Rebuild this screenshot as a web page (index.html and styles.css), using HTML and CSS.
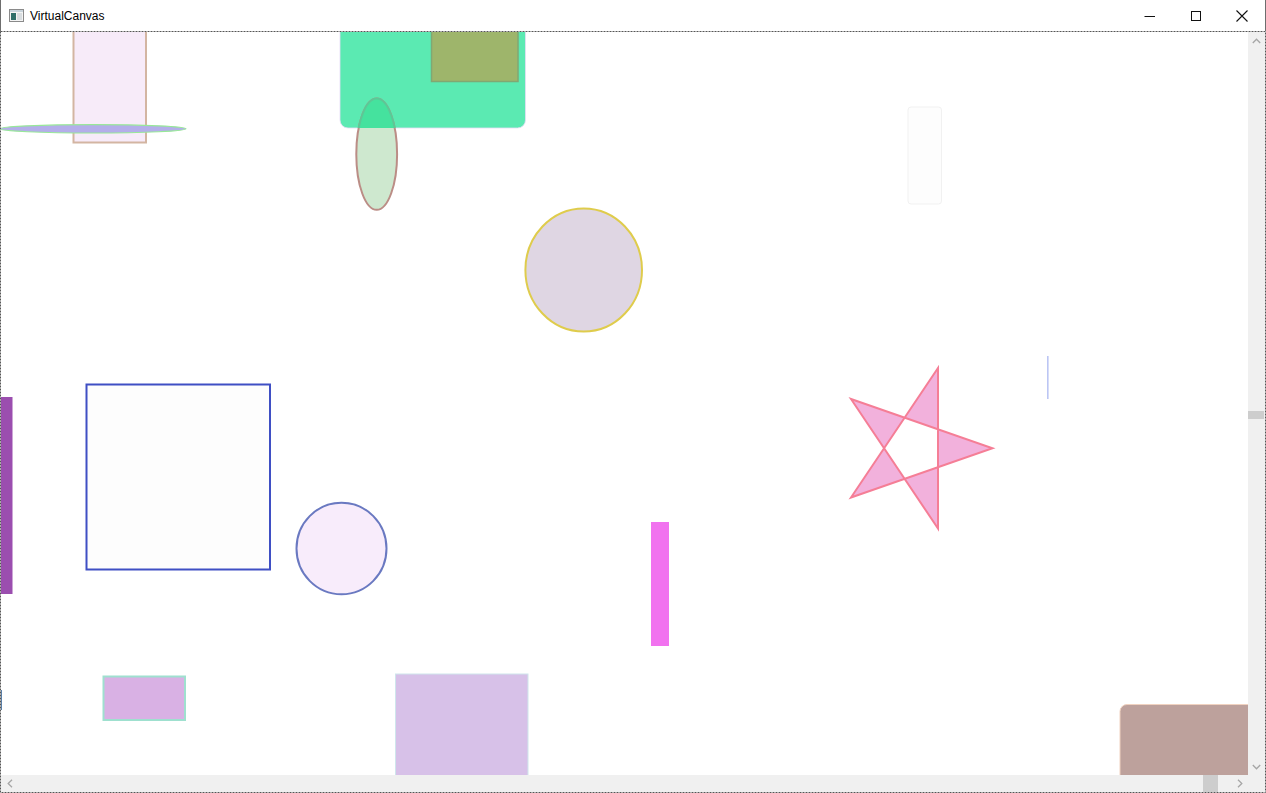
FILE: index.html
```html
<!DOCTYPE html>
<html>
<head>
<meta charset="utf-8">
<title>VirtualCanvas</title>
<link rel="stylesheet" href="styles.css">
</head>
<body>
<div class="window">
  <div class="titlebar">
    <svg class="app-icon" width="16" height="14" viewBox="0 0 16 14">
      <rect x="0.5" y="0.5" width="14" height="12" fill="#f4f4f4" stroke="#8a8a8a"/>
      <rect x="1" y="1" width="13" height="2" fill="#c8d4dc"/>
      <rect x="2" y="4" width="5" height="7" fill="#2f6f6a"/>
      <rect x="8" y="4" width="5" height="7" fill="#d8dde0"/>
    </svg>
    <span class="title">VirtualCanvas</span>
    <div class="controls">
      <div class="ctl">
        <svg width="12" height="12" viewBox="0 0 12 12"><line x1="0.5" y1="6.5" x2="11" y2="6.5" stroke="#111" stroke-width="1"/></svg>
      </div>
      <div class="ctl">
        <svg width="12" height="12" viewBox="0 0 12 12"><rect x="1.5" y="1.5" width="9" height="9" fill="none" stroke="#111" stroke-width="1"/></svg>
      </div>
      <div class="ctl">
        <svg width="12" height="12" viewBox="0 0 12 12"><path d="M0.5 0.5 L11.5 11.5 M11.5 0.5 L0.5 11.5" stroke="#111" stroke-width="1.1"/></svg>
      </div>
    </div>
  </div>
  <div class="client">
    <div class="canvas">
      <svg width="1247" height="743" viewBox="1 32 1247 743">
        <defs>
          <clipPath id="greenClip"><rect x="340" y="10" width="185.5" height="118" rx="8"/></clipPath>
        </defs>
        <rect x="73.5" y="10" width="72.5" height="132.5" fill="#f7ebf9" stroke="#d3b5a2" stroke-width="2"/>
        <ellipse cx="93" cy="128.8" rx="93" ry="4.2" fill="#b4aeea" stroke="#98e898" stroke-width="1.2"/>
        <rect x="340" y="10" width="185.5" height="118" rx="8" fill="#5beab2" stroke="#e6dcf6" stroke-width="0.8"/>
        <rect x="431.5" y="10" width="86.5" height="71.5" fill="#9eb56b" stroke="#80a873" stroke-width="1.5"/>
        <ellipse cx="376.7" cy="154.2" rx="20.4" ry="55.6" fill="#cee8cf" stroke="#bb8d86" stroke-width="2"/>
        <g clip-path="url(#greenClip)">
          <ellipse cx="376.7" cy="154.2" rx="20.4" ry="55.6" fill="#45e29e" stroke="#5cc896" stroke-width="2"/>
        </g>
        <rect x="908" y="107" width="33.5" height="97" rx="3" fill="#fdfdfd" stroke="#f1f1f1" stroke-width="1"/>
        <rect x="1047" y="356" width="1.6" height="43" fill="#bcc6f4"/>
        <ellipse cx="583.7" cy="270" rx="58.3" ry="61.6" fill="#dfd6e3" stroke="#dfcc4c" stroke-width="2"/>
        <path d="M938 368 L938 528.5 L851 399 L992.5 448.3 L851 497.5 Z" fill="#f2b1dc" fill-rule="evenodd" stroke="#f57e96" stroke-width="2" stroke-linejoin="miter"/>
        <rect x="86.5" y="384.5" width="183.5" height="185" fill="#fdfdfd" stroke="#3f4fc4" stroke-width="2"/>
        <ellipse cx="341.5" cy="548.5" rx="45" ry="45.8" fill="#f8ecfb" stroke="#6a79c1" stroke-width="2"/>
        <rect x="1" y="397" width="11.5" height="197" fill="#9b4eaf"/>
        <rect x="651" y="522" width="18" height="124" fill="#f172ef"/>
        <rect x="1" y="690" width="1" height="20" fill="#5a7fa8"/>
        <rect x="103.5" y="676.5" width="81.5" height="43.5" fill="#d9b1e4" stroke="#9fe0cf" stroke-width="2"/>
        <rect x="395.5" y="674" width="132.5" height="120" fill="#d7c1e8" stroke="#cfe6ec" stroke-width="1"/>
        <rect x="1120" y="704.5" width="160" height="120" rx="7" fill="#bda19c" stroke="#f0d2c0" stroke-width="1"/>
      </svg>
    </div>
    <div class="vscroll">
      <div class="arrow">
        <svg width="9" height="6" viewBox="0 0 9 6"><path d="M0.8 5 L4.5 1.2 L8.2 5" fill="none" stroke="#a6a6a6" stroke-width="1.3"/></svg>
      </div>
      <div class="vtrack">
        <div class="vthumb"></div>
      </div>
      <div class="arrow">
        <svg width="9" height="6" viewBox="0 0 9 6"><path d="M0.8 1 L4.5 4.8 L8.2 1" fill="none" stroke="#a6a6a6" stroke-width="1.3"/></svg>
      </div>
    </div>
    <div class="hscroll">
      <div class="harrow">
        <svg width="6" height="9" viewBox="0 0 6 9"><path d="M5 0.8 L1.2 4.5 L5 8.2" fill="none" stroke="#a6a6a6" stroke-width="1.3"/></svg>
      </div>
      <div class="htrack">
        <div class="hthumb"></div>
      </div>
      <div class="harrow">
        <svg width="6" height="9" viewBox="0 0 6 9"><path d="M1 0.8 L4.8 4.5 L1 8.2" fill="none" stroke="#a6a6a6" stroke-width="1.3"/></svg>
      </div>
    </div>
    <div class="corner"></div>
    <svg class="focus" width="1266" height="762" viewBox="0 0 1266 762">
      <rect x="0.5" y="0.5" width="1265" height="761" fill="none" stroke="#555" stroke-width="1" stroke-dasharray="2 1"/>
    </svg>
  </div>
</div>
</body>
</html>
```

FILE: styles.css
```css
html, body {
  margin: 0;
  padding: 0;
  background: #ffffff;
}

.window {
  width: 1266px;
  height: 793px;
  display: flex;
  flex-direction: column;
  overflow: hidden;
  font-family: "Liberation Sans", Arial, sans-serif;
}

.titlebar {
  height: 31px;
  flex: 0 0 31px;
  display: flex;
  align-items: center;
  background: #ffffff;
  border-left: 1px solid #6e6e6e;
  border-right: 1px solid #6e6e6e;
  box-sizing: border-box;
  padding-left: 8px;
}

.app-icon {
  display: block;
  margin-top: 1px;
}

.title {
  font-size: 12px;
  color: #000;
  margin-left: 5px;
  margin-top: 0px;
}

.controls {
  margin-left: auto;
  display: flex;
  height: 100%;
  margin-right: 0;
}

.ctl {
  width: 46px;
  display: flex;
  align-items: center;
  justify-content: center;
}

.ctl svg {
  display: block;
}

.client {
  position: relative;
  flex: 1 1 auto;
  display: grid;
  grid-template-columns: 1px 1247px 17px 1px;
  grid-template-rows: 1px 743px 17px 1px;
}

.canvas {
  grid-column: 2;
  grid-row: 2;
  background: #ffffff;
  overflow: hidden;
}

.canvas svg {
  display: block;
}

.vscroll {
  grid-column: 3;
  grid-row: 2;
  background: #f0f0f0;
  display: flex;
  flex-direction: column;
}

.arrow {
  height: 17px;
  display: flex;
  align-items: center;
  justify-content: center;
}

.arrow svg, .harrow svg {
  display: block;
}

.vtrack {
  flex: 1;
  position: relative;
}

.vthumb {
  margin-top: 362px;
  height: 8px;
  background: #cdcdcd;
  margin-left: 0;
  margin-right: 1px;
}

.hscroll {
  grid-column: 2;
  grid-row: 3;
  background: #f0f0f0;
  display: flex;
}

.harrow {
  width: 17px;
  display: flex;
  align-items: center;
  justify-content: center;
}

.htrack {
  flex: 1;
  display: flex;
}

.hthumb {
  margin-left: 1185px;
  width: 15px;
  background: #cdcdcd;
  margin-bottom: 0;
}

.corner {
  grid-column: 3;
  grid-row: 3;
  background: #f0f0f0;
}

.focus {
  position: absolute;
  left: 0;
  top: 0;
  pointer-events: none;
}
```
